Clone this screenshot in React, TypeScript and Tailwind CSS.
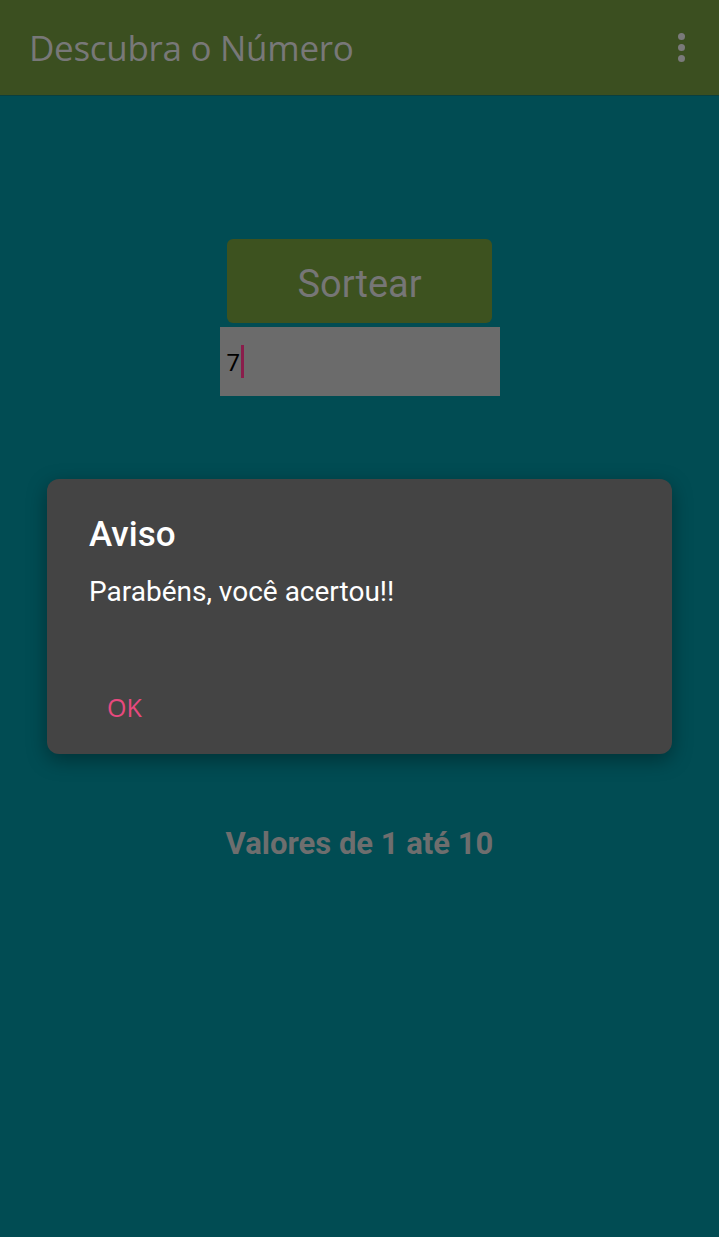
import React from "react";

export default function App() {
  return (
    <div className="w-[719px] h-[1237px] bg-[#014c53] flex flex-col" style={{ fontFamily: "Roboto, 'Noto Sans', sans-serif" }}>
      <div className="h-[96px] bg-[#3b4f20] flex items-center justify-between pl-[29px] pr-[34px] border-b border-[#0a3f3f]">
        <span className="text-[35px] text-[#787878] tracking-[-0.3px] mt-[2px]" style={{ fontFamily: "'Open Sans', Roboto, sans-serif" }}>Descubra o Número</span>
        <div className="flex flex-col gap-[4px] items-center">
          <div className="w-[7px] h-[7px] rounded-full bg-[#7a7a7a]" />
          <div className="w-[7px] h-[7px] rounded-full bg-[#7a7a7a]" />
          <div className="w-[7px] h-[7px] rounded-full bg-[#7a7a7a]" />
        </div>
      </div>
      <div className="flex flex-col items-center pt-[143px]">
        <div className="w-[265px] h-[84px] rounded-[6px] bg-[#3d521f] flex items-center justify-center">
          <span className="text-[38px] text-[#767676] mt-[6px]">Sortear</span>
        </div>
        <div className="mt-[4px] w-[280px] h-[69px] bg-[#6b6b6b] flex items-center pl-[7px]">
          <span className="text-[24px] text-black leading-none mt-[2px]">7</span>
          <div className="w-[3px] h-[33px] bg-[#8a1d4b] ml-[1px]" />
        </div>
      </div>
      <div className="mx-[47px] mt-[83px] h-[275px] rounded-[12px] bg-[#444444] shadow-[0_6px_20px_rgba(0,0,0,0.35)] flex flex-col pl-[42px]">
        <div className="mt-[38px] text-[35px] font-medium text-white leading-none">Aviso</div>
        <div className="mt-[26px] text-[28px] text-white leading-none">Parabéns, você acertou!!</div>
        <div className="mt-[89px] ml-[18px] text-[25px] text-[#e8497e] leading-none" style={{ fontFamily: "'Open Sans', Roboto, sans-serif" }}>OK</div>
      </div>
      <div className="mt-[67px] text-center text-[31px] font-bold text-[#6e6e6e]">Valores de 1 até 10</div>
    </div>
  );
}
